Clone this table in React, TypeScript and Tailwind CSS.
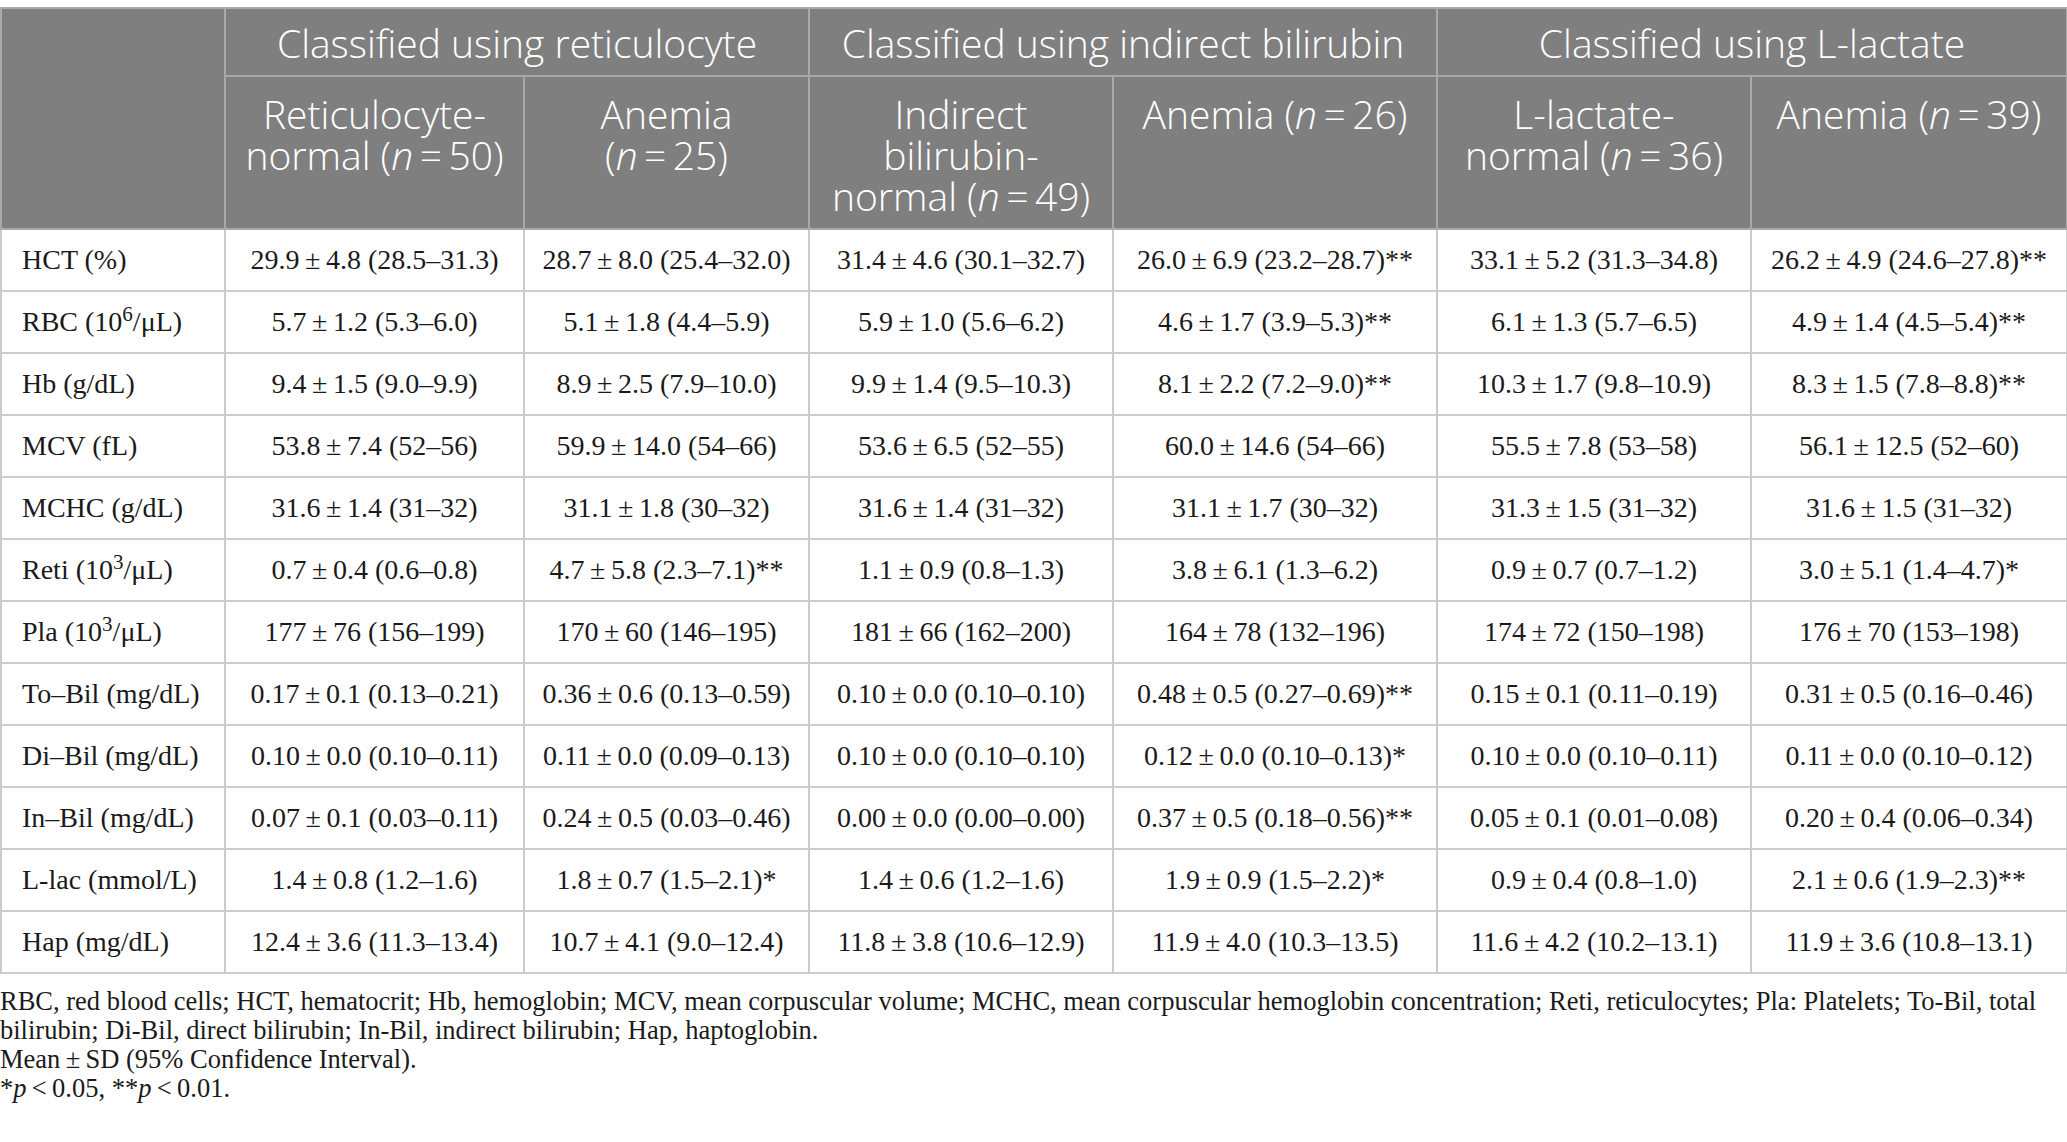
const pm = (s: string) => s.replace(/ ± /g, "\u2009±\u2009");

type Row = { label: React.ReactNode; values: string[] };

const rows: Row[] = [
  { label: "HCT (%)", values: ["29.9 ± 4.8 (28.5–31.3)", "28.7 ± 8.0 (25.4–32.0)", "31.4 ± 4.6 (30.1–32.7)", "26.0 ± 6.9 (23.2–28.7)**", "33.1 ± 5.2 (31.3–34.8)", "26.2 ± 4.9 (24.6–27.8)**"] },
  { label: <>RBC (10<sup>6</sup>/μL)</>, values: ["5.7 ± 1.2 (5.3–6.0)", "5.1 ± 1.8 (4.4–5.9)", "5.9 ± 1.0 (5.6–6.2)", "4.6 ± 1.7 (3.9–5.3)**", "6.1 ± 1.3 (5.7–6.5)", "4.9 ± 1.4 (4.5–5.4)**"] },
  { label: "Hb (g/dL)", values: ["9.4 ± 1.5 (9.0–9.9)", "8.9 ± 2.5 (7.9–10.0)", "9.9 ± 1.4 (9.5–10.3)", "8.1 ± 2.2 (7.2–9.0)**", "10.3 ± 1.7 (9.8–10.9)", "8.3 ± 1.5 (7.8–8.8)**"] },
  { label: "MCV (fL)", values: ["53.8 ± 7.4 (52–56)", "59.9 ± 14.0 (54–66)", "53.6 ± 6.5 (52–55)", "60.0 ± 14.6 (54–66)", "55.5 ± 7.8 (53–58)", "56.1 ± 12.5 (52–60)"] },
  { label: "MCHC (g/dL)", values: ["31.6 ± 1.4 (31–32)", "31.1 ± 1.8 (30–32)", "31.6 ± 1.4 (31–32)", "31.1 ± 1.7 (30–32)", "31.3 ± 1.5 (31–32)", "31.6 ± 1.5 (31–32)"] },
  { label: <>Reti (10<sup>3</sup>/μL)</>, values: ["0.7 ± 0.4 (0.6–0.8)", "4.7 ± 5.8 (2.3–7.1)**", "1.1 ± 0.9 (0.8–1.3)", "3.8 ± 6.1 (1.3–6.2)", "0.9 ± 0.7 (0.7–1.2)", "3.0 ± 5.1 (1.4–4.7)*"] },
  { label: <>Pla (10<sup>3</sup>/μL)</>, values: ["177 ± 76 (156–199)", "170 ± 60 (146–195)", "181 ± 66 (162–200)", "164 ± 78 (132–196)", "174 ± 72 (150–198)", "176 ± 70 (153–198)"] },
  { label: "To–Bil (mg/dL)", values: ["0.17 ± 0.1 (0.13–0.21)", "0.36 ± 0.6 (0.13–0.59)", "0.10 ± 0.0 (0.10–0.10)", "0.48 ± 0.5 (0.27–0.69)**", "0.15 ± 0.1 (0.11–0.19)", "0.31 ± 0.5 (0.16–0.46)"] },
  { label: "Di–Bil (mg/dL)", values: ["0.10 ± 0.0 (0.10–0.11)", "0.11 ± 0.0 (0.09–0.13)", "0.10 ± 0.0 (0.10–0.10)", "0.12 ± 0.0 (0.10–0.13)*", "0.10 ± 0.0 (0.10–0.11)", "0.11 ± 0.0 (0.10–0.12)"] },
  { label: "In–Bil (mg/dL)", values: ["0.07 ± 0.1 (0.03–0.11)", "0.24 ± 0.5 (0.03–0.46)", "0.00 ± 0.0 (0.00–0.00)", "0.37 ± 0.5 (0.18–0.56)**", "0.05 ± 0.1 (0.01–0.08)", "0.20 ± 0.4 (0.06–0.34)"] },
  { label: "L-lac (mmol/L)", values: ["1.4 ± 0.8 (1.2–1.6)", "1.8 ± 0.7 (1.5–2.1)*", "1.4 ± 0.6 (1.2–1.6)", "1.9 ± 0.9 (1.5–2.2)*", "0.9 ± 0.4 (0.8–1.0)", "2.1 ± 0.6 (1.9–2.3)**"] },
  { label: "Hap (mg/dL)", values: ["12.4 ± 3.6 (11.3–13.4)", "10.7 ± 4.1 (9.0–12.4)", "11.8 ± 3.8 (10.6–12.9)", "11.9 ± 4.0 (10.3–13.5)", "11.6 ± 4.2 (10.2–13.1)", "11.9 ± 3.6 (10.8–13.1)"] },
];

function N({ value }: { value: number }) {
  return (
    <>
      (<i>n</i>{"\u2009=\u2009"}{value})
    </>
  );
}

const head = "border-2 border-[#a9a9a9] bg-[#7f7f7f] px-2 text-center align-top font-light text-white";

export default function App() {
  return (
    <div className="min-h-screen bg-white pt-[7px]">
      <table className="w-[2066px] table-fixed border-collapse">
        <colgroup>
          <col className="w-[224px]" />
          <col className="w-[299px]" />
          <col className="w-[285px]" />
          <col className="w-[304px]" />
          <col className="w-[324px]" />
          <col className="w-[314px]" />
          <col className="w-[316px]" />
        </colgroup>
        <thead className="font-['Open_Sans',sans-serif] text-[39px] leading-[41px]">
          <tr className="h-[68px]">
            <th rowSpan={2} className={head}></th>
            <th colSpan={2} className={`${head} !align-middle`}>Classified using reticulocyte</th>
            <th colSpan={2} className={`${head} !align-middle`}>Classified using indirect bilirubin</th>
            <th colSpan={2} className={`${head} !align-middle`}>Classified using L-lactate</th>
          </tr>
          <tr className="h-[153px]">
            <th className={`${head} pt-[16px]`}>
              Reticulocyte-<br />normal <N value={50} />
            </th>
            <th className={`${head} pt-[16px]`}>
              Anemia<br /><N value={25} />
            </th>
            <th className={`${head} pt-[16px]`}>
              Indirect<br />bilirubin-<br />normal <N value={49} />
            </th>
            <th className={`${head} pt-[16px]`}>
              Anemia <N value={26} />
            </th>
            <th className={`${head} pt-[16px]`}>
              L-lactate-<br />normal <N value={36} />
            </th>
            <th className={`${head} pt-[16px]`}>
              Anemia <N value={39} />
            </th>
          </tr>
        </thead>
        <tbody className="font-['Liberation_Serif',serif] text-[28px] leading-[32px] text-[#1a1a1a]">
          {rows.map((row, i) => (
            <tr key={i} className="h-[62px]">
              <td className="whitespace-nowrap border-2 border-[#cbcbcb] pl-[20px]">{row.label}</td>
              {row.values.map((v, j) => (
                <td key={j} className="whitespace-nowrap border-2 border-[#cbcbcb] text-center">
                  {pm(v)}
                </td>
              ))}
            </tr>
          ))}
        </tbody>
      </table>
      <div className="mt-[13px] font-['Liberation_Serif',serif] text-[26.5px] leading-[29px] text-[#1a1a1a]">
        <p className="whitespace-nowrap">
          RBC, red blood cells; HCT, hematocrit; Hb, hemoglobin; MCV, mean corpuscular volume; MCHC, mean corpuscular hemoglobin concentration; Reti, reticulocytes; Pla: Platelets; To-Bil, total
        </p>
        <p>bilirubin; Di-Bil, direct bilirubin; In-Bil, indirect bilirubin; Hap, haptoglobin.</p>
        <p>Mean{"\u2009±\u2009"}SD (95% Confidence Interval).</p>
        <p>
          *<i>p</i>{"\u2009<\u2009"}0.05, **<i>p</i>{"\u2009<\u2009"}0.01.
        </p>
      </div>
    </div>
  );
}
